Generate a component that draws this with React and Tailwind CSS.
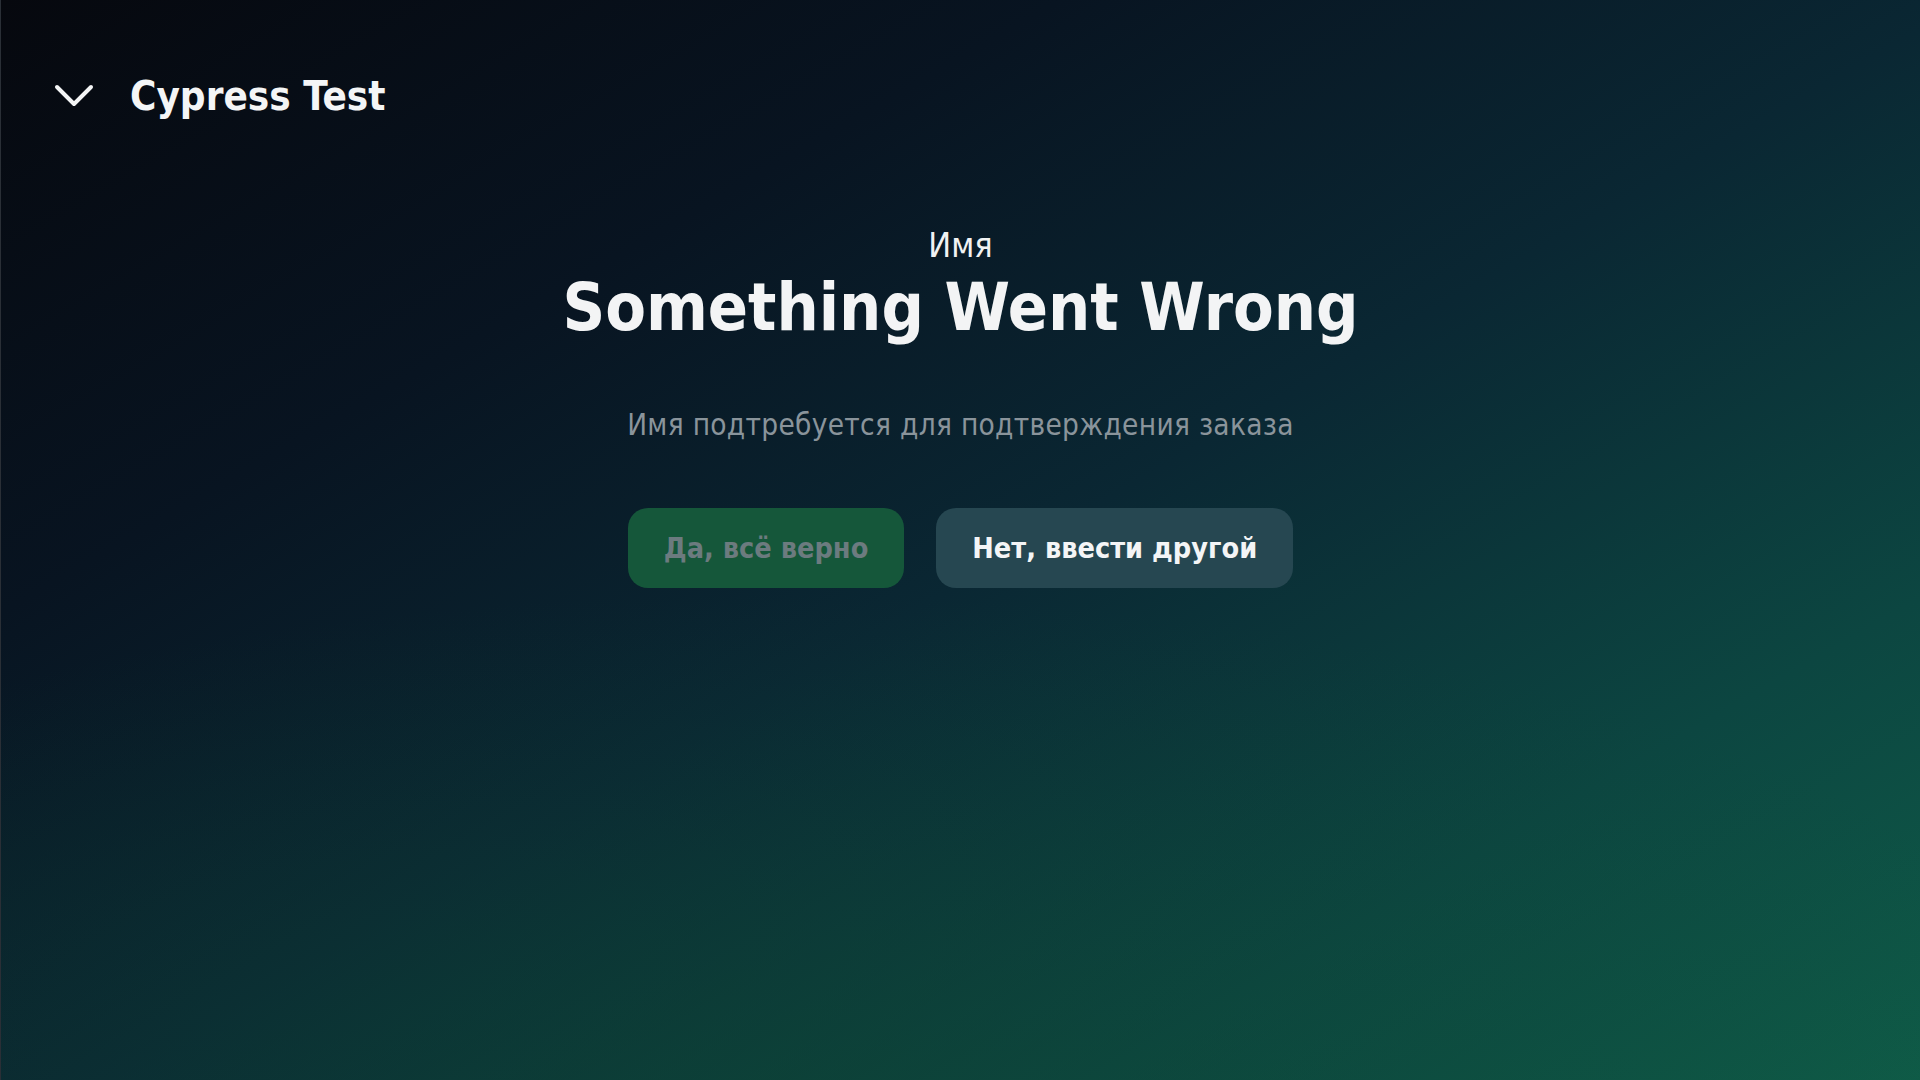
import React from 'react';

const ChevronDown = () => (
  <svg width="40" height="26" viewBox="0 0 40 26" fill="none" className="shrink-0">
    <path d="M3 4 L20 21 L37 4" stroke="#f4f5f6" strokeWidth="4" strokeLinecap="round" strokeLinejoin="round" />
  </svg>
);

export default function App() {
  return (
    <div
      className="min-h-screen w-full flex flex-col text-white border-l border-[#2a2f36] bg-[radial-gradient(ellipse_70%_45%_at_40%_100%,rgba(14,70,50,0.45),transparent_100%),linear-gradient(150deg,#06080e_0%,#081421_28%,#0a2733_52%,#0c4641_78%,#0f5c48_100%)]"
      style={{ fontFamily: '"DejaVu Sans Condensed", "DejaVu Sans", Verdana, sans-serif' }}
    >
      {/* header */}
      <header className="flex items-center gap-[36px] pl-[53px] pt-[72px]">
        <ChevronDown />
        <h1 className="text-[40px] leading-[48px] font-bold text-[#f4f5f6]">Cypress Test</h1>
      </header>

      {/* content */}
      <main className="flex flex-col items-center mt-[104px]">
        <p className="text-[34px] leading-[42px] text-[#f1f2f3]">Имя</p>
        <h2 className="mt-[3px] text-[66px] leading-[78px] font-bold text-[#f3f4f5]">Something Went Wrong</h2>
        <p className="mt-[60px] text-[29.5px] leading-[36px] text-[#8a949b] tracking-[0.3px]">
          Имя подтребуется для подтверждения заказа
        </p>

        <div className="mt-[65px] flex items-center gap-[32px]">
          <button
            type="button"
            disabled
            className="h-[80px] px-[36px] rounded-[20px] bg-[#15573a] text-[#6c7b7f] text-[28.6px] font-bold"
          >
            Да, всё верно
          </button>
          <button
            type="button"
            className="h-[80px] px-[36px] rounded-[20px] bg-[#264751] text-[#f4f5f6] text-[28.6px] font-bold"
          >
            Нет, ввести другой
          </button>
        </div>
      </main>
    </div>
  );
}
